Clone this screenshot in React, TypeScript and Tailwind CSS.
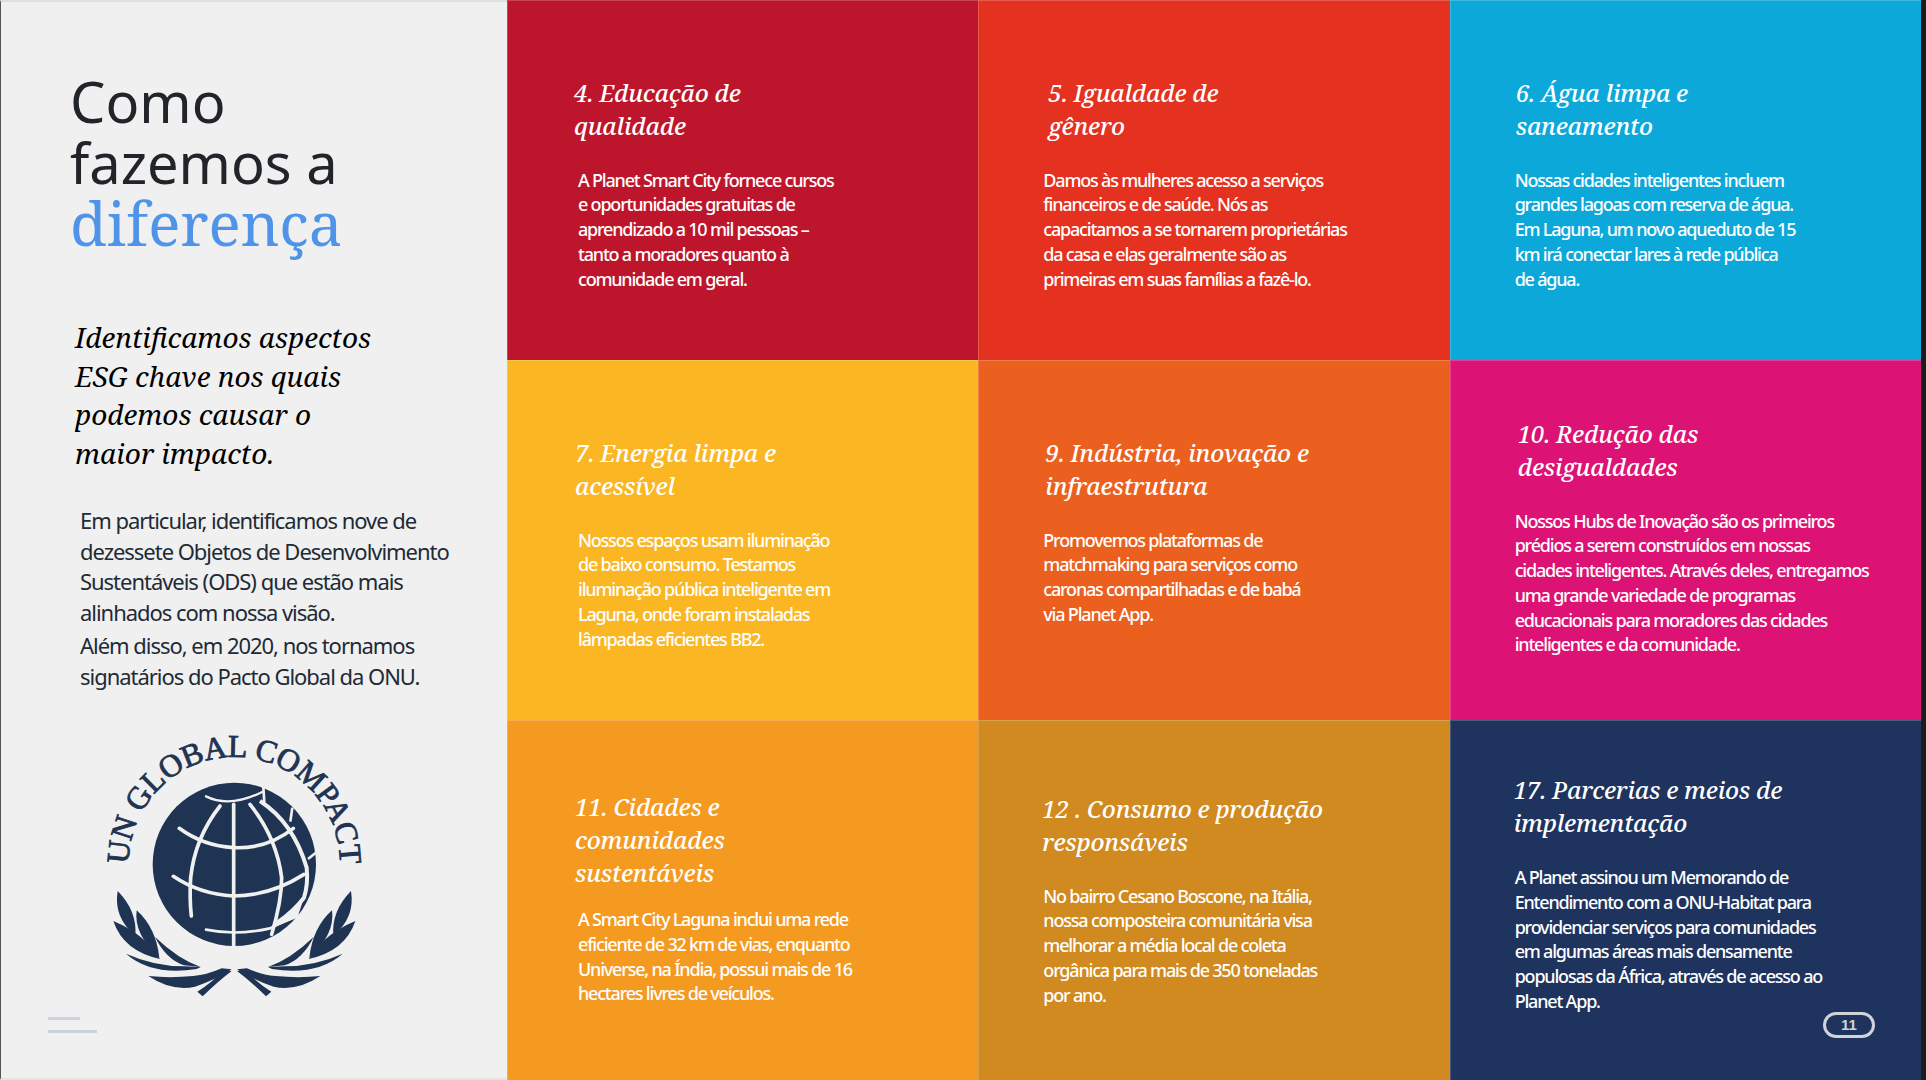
import React from "react";

const serif = "[font-family:'Noto_Serif','DejaVu_Serif',serif]";

interface Card {
  title: string[];
  body: string[];
  color: string;
  pad: string;
  bodyPos: string;
}

const cards: Card[] = [
  {
    title: ["4. Educação de", "qualidade"],
    body: ["A Planet Smart City fornece cursos", "e oportunidades gratuitas de", "aprendizado a 10 mil pessoas –", "tanto a moradores quanto à", "comunidade em geral."],
    color: "bg-[#bd162c]",
    pad: "pl-[66px] pt-[75px]",
    bodyPos: "ml-[4px] mt-[25.5px]",
  },
  {
    title: ["5. Igualdade de", "gênero"],
    body: ["Damos às mulheres acesso a serviços", "financeiros e de saúde. Nós as", "capacitamos a se tornarem proprietárias", "da casa e elas geralmente são as", "primeiras em suas famílias a fazê-lo."],
    color: "bg-[#e5311f]",
    pad: "pl-[69px] pt-[75px]",
    bodyPos: "-ml-[5px] mt-[25.5px]",
  },
  {
    title: ["6. Água limpa e", "saneamento"],
    body: ["Nossas cidades inteligentes incluem", "grandes lagoas com reserva de água.", "Em Laguna, um novo aqueduto de 15", "km irá conectar lares à rede pública", "de água."],
    color: "bg-[#0ca8d9]",
    pad: "pl-[65px] pt-[75px]",
    bodyPos: "-ml-[1px] mt-[25.5px]",
  },
  {
    title: ["7. Energia limpa e", "acessível"],
    body: ["Nossos espaços usam iluminação", "de baixo consumo. Testamos", "iluminação pública inteligente em", "Laguna, onde foram instaladas", "lâmpadas eficientes BB2."],
    color: "bg-[#fbb623]",
    pad: "pl-[67px] pt-[75px]",
    bodyPos: "ml-[3px] mt-[25.5px]",
  },
  {
    title: ["9. Indústria, inovação e", "infraestrutura"],
    body: ["Promovemos plataformas de", "matchmaking para serviços como", "caronas compartilhadas e de babá", "via Planet App."],
    color: "bg-[#ec601f]",
    pad: "pl-[66px] pt-[75px]",
    bodyPos: "-ml-[2px] mt-[25.5px]",
  },
  {
    title: ["10. Redução das", "desigualdades"],
    body: ["Nossos Hubs de Inovação são os primeiros", "prédios a serem construídos em nossas", "cidades inteligentes. Através deles, entregamos", "uma grande variedade de programas", "educacionais para moradores das cidades", "inteligentes e da comunidade."],
    color: "bg-[#dc1275]",
    pad: "pl-[67px] pt-[56px]",
    bodyPos: "-ml-[3px] mt-[25.5px]",
  },
  {
    title: ["11. Cidades e", "comunidades", "sustentáveis"],
    body: ["A Smart City Laguna inclui uma rede", "eficiente de 32 km de vias, enquanto", "Universe, na Índia, possui mais de 16", "hectares livres de veículos."],
    color: "bg-[#f59a21]",
    pad: "pl-[67px] pt-[69px]",
    bodyPos: "ml-[3px] mt-[18px]",
  },
  {
    title: ["12 . Consumo e produção", "responsáveis"],
    body: ["No bairro Cesano Boscone, na Itália,", "nossa composteira comunitária visa", "melhorar a média local de coleta", "orgânica para mais de 350 toneladas", "por ano."],
    color: "bg-[#d08a20]",
    pad: "pl-[63px] pt-[71px]",
    bodyPos: "ml-[1px] mt-[25.5px]",
  },
  {
    title: ["17. Parcerias e meios de", "implementação"],
    body: ["A Planet assinou um Memorando de", "Entendimento com a ONU-Habitat para", "providenciar serviços para comunidades", "em algumas áreas mais densamente", "populosas da África, através de acesso ao", "Planet App."],
    color: "bg-[#1e335e]",
    pad: "pl-[63px] pt-[52px]",
    bodyPos: "ml-[1px] mt-[26px]",
  },
];

const navy = "#1f3352";
const panel = "#f0f0f0";

// left half of the wreath, the right half is the same thing mirrored
const Wreath = () => (
  <g fill={navy}>
    <path d="M113 510 Q100 590 166 644 Q172 570 113 510Z" />
    <path d="M100 600 Q130 690 240 714 Q195 640 100 600Z" />
    <path d="M170 568 Q160 640 238 710 Q228 620 170 568Z" />
    <path d="M138 698 Q215 765 350 744 L362 738 L312 736 Q220 735 138 698Z" />
    <path d="M225 648 Q258 715 312 733 L362 738 Q295 715 225 648Z" />
    <path d="M205 765 Q275 812 345 797 Q400 780 455 745 L425 742 Q380 762 340 765 Q270 772 205 765Z" />
    <path d="M352 812 L368 826 Q415 780 455 750 L432 746 Q395 785 352 812Z" />
  </g>
);

const GlobalCompactLogo = () => (
  <svg viewBox="0 0 930 870" className="w-[310px] h-[290px] shrink-0">
    <defs>
      <path id="ungc-arc" d="M146 430 A317 322 0 0 1 780 430" />
    </defs>
    <text fill={navy} stroke={navy} strokeWidth="2.5" fontSize="95" fontFamily="'Liberation Serif', serif">
      <textPath href="#ungc-arc" textLength="1005" lengthAdjust="spacing">
        UN GLOBAL COMPACT
      </textPath>
    </text>
    <circle cx="463" cy="430" r="245" fill={navy} />
    <g fill="none" stroke={panel} strokeWidth="11" strokeLinecap="round">
      <path d="M378 226 Q450 262 548 212" strokeWidth="7" />
      <path d="M461 250 L461 680" />
      <path d="M420 255 Q345 350 332 470 Q328 530 334 585" />
      <path d="M510 250 Q590 350 605 470 Q605 540 575 640" />
      <path d="M298 322 Q370 375 460 380 Q560 385 640 322" />
      <path d="M280 466 Q360 520 460 525 Q570 525 672 460" />
      <path d="M378 626 Q470 645 570 622 L652 582" strokeWidth="8" />
    </g>
    {/* the cut-out edge on the right side of the globe */}
    <g fill="none" stroke={panel} strokeWidth="12">
      <path d="M540 240 Q640 305 680 440 Q685 490 672 530 Q640 572 590 606" />
      <path d="M550 198 L553 245" strokeWidth="8" />
      <path d="M637 260 L631 302" strokeWidth="8" />
      <path d="M684 414 L714 390" strokeWidth="8" />
    </g>
    <path d="M672 530 L652 590 L575 622 L590 604Z" fill={panel} />
    <Wreath />
    <g transform="translate(926 0) scale(-1 1)">
      <Wreath />
    </g>
  </svg>
);

const CardCell = ({ card }: { card: Card }) => (
  <div className={`${card.color} ${card.pad} border-l border-t border-white/20 text-white`}>
    <h3 className={`${serif} italic font-medium text-[24px] leading-[33px] tracking-[-0.25px] whitespace-nowrap`}>
      {card.title.map((line) => (
        <span key={line} className="block">{line}</span>
      ))}
    </h3>
    <p className={`${card.bodyPos} font-['Noto_Sans',sans-serif] font-medium text-[18px] leading-[24.8px] tracking-[-1.2px] whitespace-nowrap`}>
      {card.body.map((line) => (
        <span key={line} className="block">{line}</span>
      ))}
    </p>
  </div>
);

export default function App() {
  return (
    <div className="w-[1926px] h-[1080px] overflow-hidden flex bg-[#1b1b1b]">
      <div className="relative w-[507px] h-full shrink-0 bg-[#f0f0f0] border-l border-l-[#555] border-t-2 border-t-[#e0e0e0] border-b-2 border-b-[#e4e4e4]">
        <div className="pl-[69px] pt-[69px]">
          <h1 className="font-['Noto_Sans',sans-serif] text-[56px] leading-[61px] text-[#212529]">
            <span className="block">Como</span>
            <span className="block">fazemos a</span>
            <span className={`block ${serif} text-[60px] text-[#4f94e8]`}>diferença</span>
          </h1>
          <h2 className={`${serif} italic text-black text-[28px] leading-[38.5px] ml-[5px] mt-[64px] whitespace-nowrap`}>
            <span className="block">Identificamos aspectos</span>
            <span className="block">ESG chave nos quais</span>
            <span className="block">podemos causar o</span>
            <span className="block">maior impacto.</span>
          </h2>
          <div className="font-['Noto_Sans',sans-serif] text-[22px] leading-[30.7px] tracking-[-1.03px] text-[#212a36] ml-[10px] mt-[33px] whitespace-nowrap">
            <p>
              <span className="block">Em particular, identificamos nove de</span>
              <span className="block">dezessete Objetos de Desenvolvimento</span>
              <span className="block">Sustentáveis (ODS) que estão mais</span>
              <span className="block">alinhados com nossa visão.</span>
            </p>
            <p className="mt-[2.5px]">
              <span className="block">Além disso, em 2020, nos tornamos</span>
              <span className="block">signatários do Pacto Global da ONU.</span>
            </p>
          </div>
        </div>
        <div className="mt-[29px] ml-[79px]">
          <GlobalCompactLogo />
        </div>
        <div className="absolute left-[47px] top-[1015px] flex flex-col gap-[10px]">
          <div className="w-[32px] h-[3px] bg-[#cdd3de]" />
          <div className="w-[49px] h-[3px] bg-[#cdd3de]" />
        </div>
      </div>
      <div className="relative w-[1414px] h-full shrink-0 grid grid-cols-3 grid-rows-3">
        {cards.map((card) => (
          <CardCell key={card.title[0]} card={card} />
        ))}
        <div className="absolute left-[1316px] top-[1012px] w-[52px] h-[26px] rounded-full border-[3px] border-[#d0d3d8] flex items-center justify-center font-['Liberation_Sans',sans-serif] font-bold text-[15px] text-[#d0d3d8]">
          11
        </div>
      </div>
    </div>
  );
}
